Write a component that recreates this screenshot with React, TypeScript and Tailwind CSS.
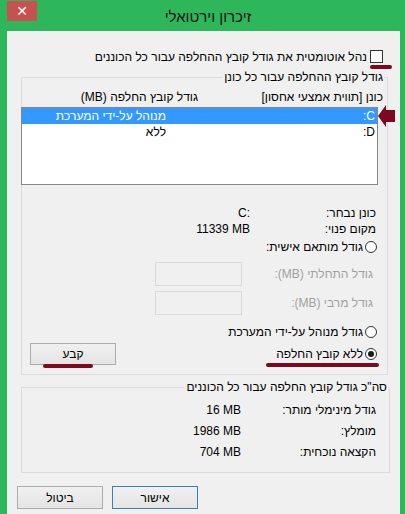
import React from "react";

const font = { fontFamily: '"Liberation Sans", "DejaVu Sans", sans-serif' };

function Radio({ checked = false }: { checked?: boolean }) {
  return (
    <span className="flex h-[12px] w-[12px] shrink-0 items-center justify-center rounded-full border border-[#333333] bg-white">
      {checked && <span className="h-[6px] w-[6px] rounded-full bg-[#1a1a1a]" />}
    </span>
  );
}

function Button({ label, primary = false }: { label: string; primary?: boolean }) {
  return (
    <button
      className={`h-[23px] w-[86px] border bg-linear-to-b from-[#f0f0f0] to-[#e5e5e5] text-[12px] text-black ${
        primary ? "border-[#3c7fb1]" : "border-[#acacac]"
      }`}
    >
      {label}
    </button>
  );
}

export default function App() {
  return (
    <div className="flex h-[514px] w-[405px] flex-col overflow-hidden bg-[#2eb65a] text-[12px] leading-[16px] text-black" style={font}>
      {/* Title bar */}
      <div className="flex h-[31px] shrink-0">
        <div className="ml-[7px] mt-[1px] flex h-[20px] w-[30px] items-center justify-center bg-[#c75050] text-[14px] font-bold text-white">
          ✕
        </div>
        <div className="flex-1 pr-[26px] pt-[8px] text-center text-[15px] leading-[18px] text-[#111]">
          זיכרון וירטואלי
        </div>
      </div>

      {/* Client area */}
      <div dir="rtl" className="relative ml-[7px] mr-[5px] flex flex-1 flex-col bg-[#f0f0f0]">
        {/* Auto-manage checkbox */}
        <label className="mt-[19px] flex h-[13px] items-center gap-[3px] pr-[17px]">
          <span className="h-[13px] w-[13px] shrink-0 border border-[#333333] bg-white" />
          <span>נהל אוטומטית את גודל קובץ ההחלפה עבור כל הכוננים</span>
        </label>

        {/* Per-drive group */}
        <fieldset className="ml-[14px] mr-[12px] mt-[6px] border border-[#dcdcdc] pb-[9px]">
          <legend className="mr-[3px] px-[1px]">גודל קובץ ההחלפה עבור כל כונן</legend>

          <div className="mt-[4px] flex pr-[4px]">
            <span className="w-[185px]">כונן [תווית אמצעי אחסון]</span>
            <span>גודל קובץ החלפה (MB)</span>
          </div>

          <div className="-ml-px mr-[9px] mt-[2px] h-[78px] border border-[#828790] bg-white">
            <div className="flex h-[16px] items-center bg-[#3399ff] pr-[2px] text-white">
              <span className="w-[209px]">C:</span>
              <span>מנוהל על-ידי המערכת</span>
            </div>
            <div className="flex h-[16px] items-center pr-[2px]">
              <span className="w-[209px]">D:</span>
              <span>ללא</span>
            </div>
          </div>

          <div className="mt-[20px] flex pr-[11px]">
            <span className="w-[126px]">כונן נבחר:</span>
            <span dir="ltr">C:</span>
          </div>
          <div className="flex pr-[11px]">
            <span className="w-[126px]">מקום פנוי:</span>
            <span dir="ltr">11339 MB</span>
          </div>

          <div className="mt-[2px] flex h-[16px] items-center gap-[2px] pr-[10px]">
            <Radio />
            <span>גודל מותאם אישית:</span>
          </div>

          <div className="mt-[7px] flex h-[24px] items-center pr-[14px] text-[#a0a0a0]">
            <span className="w-[131px]">גודל התחלתי (MB):</span>
            <span className="h-[24px] w-[87px] border border-[#d9d9d9] bg-[#f0f0f0]" />
          </div>
          <div className="mt-[5px] flex h-[24px] items-center pr-[14px] text-[#a0a0a0]">
            <span className="w-[131px]">גודל מרבי (MB):</span>
            <span className="h-[24px] w-[87px] border border-[#d9d9d9] bg-[#f0f0f0]" />
          </div>

          <div className="mt-[9px] flex h-[16px] items-center gap-[2px] pr-[10px]">
            <Radio />
            <span>גודל מנוהל על-ידי המערכת</span>
          </div>

          <div className="mt-[3px] flex h-[22px] items-center justify-between pl-[8px] pr-[10px]">
            <div className="flex items-center gap-[2px]">
              <Radio checked />
              <span>ללא קובץ החלפה</span>
            </div>
            <button className="h-[22px] w-[86px] border border-[#acacac] bg-linear-to-b from-[#f0f0f0] to-[#e5e5e5] text-[12px]">
              קבע
            </button>
          </div>
        </fieldset>

        {/* Totals group */}
        <fieldset className="ml-[14px] mr-[10px] mt-[4px] border border-[#dcdcdc] pb-[10px]">
          <legend className="mr-[1px] px-[1px]">סה"כ גודל קובץ החלפה עבור כל הכוננים</legend>
          <div className="mt-[4px] flex flex-col pr-[13px]">
            {[
              ["גודל מינימלי מותר:", "16 MB"],
              ["מומלץ:", "1986 MB"],
              ["הקצאה נוכחית:", "704 MB"],
            ].map(([k, v]) => (
              <div key={k} className="flex h-[21px] items-center">
                <span className="w-[135px]">{k}</span>
                <span dir="ltr">{v}</span>
              </div>
            ))}
          </div>
        </fieldset>

        <div className="mt-[13px] flex justify-end gap-[9px] pl-[10px]">
          <Button label="אישור" primary />
          <Button label="ביטול" />
        </div>

        {/* Red annotation marks */}
        <span className="absolute left-[363px] top-[34px] h-[4px] w-[22px] rounded-full bg-[#7b0a1e]" />
        <span className="absolute left-[259px] top-[332px] h-[4px] w-[113px] rounded-full bg-[#7b0a1e]" />
        <span className="absolute left-[36px] top-[333px] h-[4px] w-[50px] rounded-full bg-[#7b0a1e]" />
        <svg className="absolute left-[371px] top-[74px]" width="17" height="22" viewBox="0 0 17 22">
          <polygon points="0,11 8,0 8,5 17,5 17,17 8,17 8,22" fill="#7b0a1e" />
        </svg>
      </div>
    </div>
  );
}
